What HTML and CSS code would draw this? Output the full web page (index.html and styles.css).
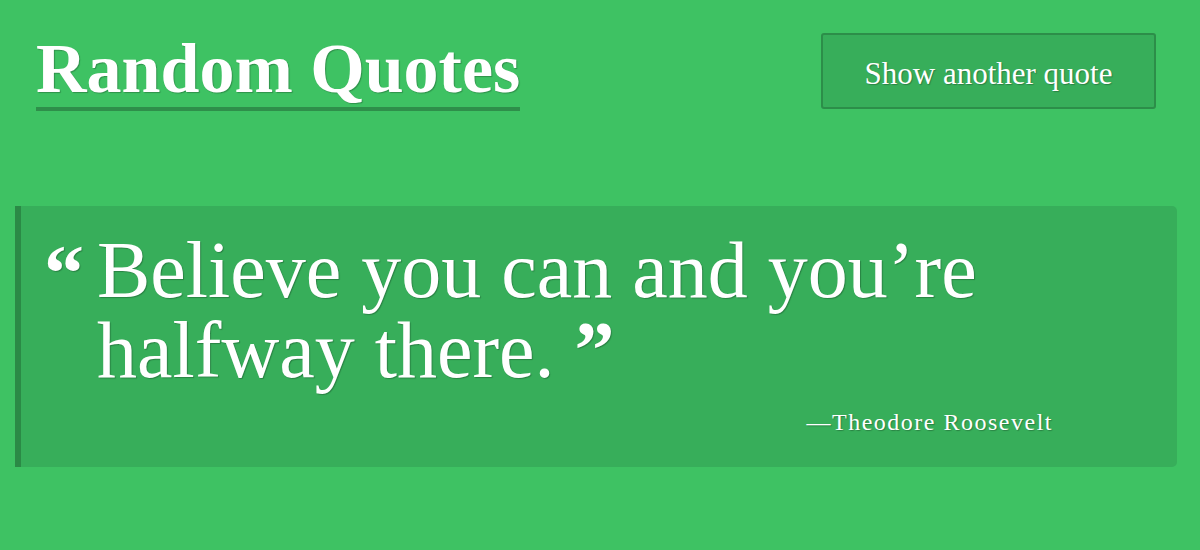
FILE: index.html
```html
<!DOCTYPE html>
<html lang="en">
<head>
<meta charset="utf-8">
<title>Random Quotes</title>
<link rel="stylesheet" href="styles.css">
</head>
<body>
  <header class="top">
    <h1 class="title">Random Quotes</h1>
    <button class="next-btn" type="button">Show another quote</button>
  </header>
  <main class="card">
    <span class="open-mark">“</span>
    <div class="quote-body">
      <p class="quote-text">Believe you can and you’re halfway there.<span class="close-mark"> ”</span></p>
      <p class="author">—Theodore Roosevelt</p>
    </div>
  </main>
</body>
</html>
```
FILE: styles.css
```css
html, body {
  margin: 0;
  padding: 0;
}

body {
  background: #3ec263;
  color: #ffffff;
  font-family: "Liberation Serif", "Times New Roman", serif;
  width: 1200px;
  height: 550px;
  overflow: hidden;
}

.top {
  display: flex;
  justify-content: space-between;
  align-items: flex-start;
  padding: 33px 44px 0 36px;
}

.title {
  margin: 1px 0 0 0;
  font-size: 70px;
  font-weight: 700;
  line-height: 70px;
  padding-bottom: 3px;
  border-bottom: 4px solid #2e8f4a;
  text-shadow: 1px 1px 1px rgba(0, 0, 0, 0.25);
}

.next-btn {
  width: 335px;
  height: 76px;
  background: #37ae5a;
  border: 2px solid #2c8e49;
  border-radius: 3px;
  color: #ffffff;
  font-family: "Liberation Serif", "Times New Roman", serif;
  font-size: 31px;
  padding: 5px 0 0 0;
  text-shadow: 1px 1px 1px rgba(0, 0, 0, 0.25);
}

.card {
  display: flex;
  align-items: flex-start;
  margin: 95px 23px 0 15px;
  background: #37ae5a;
  border-left: 6px solid #2b8a46;
  border-radius: 0 5px 5px 0;
  padding: 24px 124px 31px 23px;
  text-shadow: 1px 1px 1px rgba(0, 0, 0, 0.25);
}

.open-mark {
  font-size: 80px;
  font-weight: 700;
  line-height: 80px;
  width: 53px;
  flex: none;
  padding-top: 3px;
}

.quote-body {
  flex: 1;
}

.quote-text {
  margin: 0;
  font-size: 80px;
  line-height: 80px;
}

.close-mark {
  font-weight: 700;
}

.author {
  margin: 18px 0 0 0;
  text-align: right;
  font-size: 24px;
  line-height: 28px;
  letter-spacing: 1.5px;
}
```
